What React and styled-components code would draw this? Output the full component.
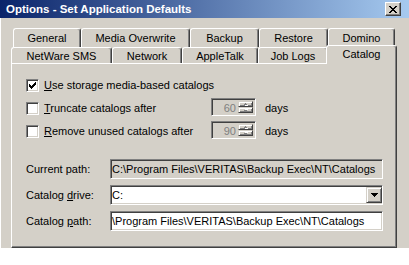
import React from "react";
import styled, { createGlobalStyle } from "styled-components";

const face = "#d4d0c8";
const shadow = "#808080";
const dark = "#404040";

const GlobalStyle = createGlobalStyle`
  html, body {
    margin: 0;
    padding: 0;
    background: #fff;
  }
  body {
    font-family: "Liberation Sans", Arial, sans-serif;
    font-size: 11px;
    color: #000;
  }
`;

const Window = styled.div`
  width: 409px;
  height: 248px;
  background: ${face};
  box-shadow: inset 1px 0 #fff;
  display: flex;
  flex-direction: column;
`;

const TitleBar = styled.div`
  height: 18px;
  flex: none;
  display: flex;
  align-items: center;
  justify-content: space-between;
  padding: 0 8px 0 6px;
  background: linear-gradient(to right, #0a246a, #a6caf0);
  color: #fff;
  font-weight: bold;
  font-size: 11.5px;
`;

const CloseButton = styled.div`
  width: 16px;
  height: 14px;
  box-sizing: border-box;
  background: ${face};
  border: 1px solid;
  border-color: #fff ${dark} ${dark} #fff;
  box-shadow: inset -1px -1px ${shadow};
  display: flex;
  align-items: center;
  justify-content: center;
`;

const Body = styled.div`
  flex: 1;
  padding: 10px 0 0 11px;
  display: flex;
  flex-direction: column;
`;

const TabRow = styled.div`
  display: flex;
  height: ${p => p.$h}px;
  padding-left: ${p => p.$indent || 0}px;
  position: relative;
  z-index: ${p => p.$z || 0};
`;

const Tab = styled.div`
  flex: none;
  width: ${p => p.$w}px;
  height: 100%;
  box-sizing: border-box;
  background: ${face};
  border-top: 1px solid #fff;
  border-left: 1px solid #fff;
  border-right: 1px solid ${dark};
  border-radius: 3px 3px 0 0;
  box-shadow: inset -1px 0 ${shadow};
  display: flex;
  align-items: center;
  justify-content: center;
  white-space: nowrap;
`;

const ActiveTab = styled(Tab)`
  position: relative;
  z-index: 2;
  margin: -2px 0 0 -2px;
  height: calc(100% + 3px);
  padding-bottom: 3px;
`;

const Panel = styled.div`
  width: 386px;
  height: 185px;
  box-sizing: border-box;
  border: 1px solid;
  border-color: #fff ${dark} ${dark} #fff;
  box-shadow: inset -1px -1px ${shadow};
  padding: 11px 0 0 14px;
`;

const CheckGrid = styled.div`
  display: grid;
  grid-template-columns: 176px 45px auto;
  grid-auto-rows: 20px;
  column-gap: 9px;
  row-gap: 3px;
  align-items: center;
`;

const CheckLabel = styled.label`
  grid-column: ${p => (p.$wide ? "1 / -1" : "auto")};
  display: flex;
  align-items: center;
  gap: 5px;
  white-space: nowrap;
`;

const Sunken = styled.div`
  box-sizing: border-box;
  border: 1px solid;
  border-color: ${shadow} #fff #fff ${shadow};
  box-shadow: inset 1px 1px ${dark}, inset -1px -1px ${face};
`;

const CheckBox = styled(Sunken)`
  width: 13px;
  height: 13px;
  flex: none;
  background: #fff;
  display: flex;
  align-items: center;
  justify-content: center;
`;

const Spin = styled(Sunken)`
  width: 45px;
  height: 18px;
  align-self: start;
  background: ${face};
  display: flex;
  padding: 2px;
`;

const SpinValue = styled.div`
  flex: 1;
  text-align: right;
  color: ${shadow};
  line-height: 14px;
  padding-right: 2px;
`;

const SpinButtons = styled.div`
  width: 15px;
  display: flex;
  flex-direction: column;
`;

const Raised = styled.div`
  box-sizing: border-box;
  background: ${face};
  border: 1px solid;
  border-color: ${face} ${dark} ${dark} ${face};
  box-shadow: inset 1px 1px #fff, inset -1px -1px ${shadow};
  display: flex;
  align-items: center;
  justify-content: center;
`;

const SpinButton = styled(Raised)`
  flex: 1;
`;

const FieldGrid = styled.div`
  margin-top: 18px;
  display: grid;
  grid-template-columns: 84px 273px;
  grid-auto-rows: 20px;
  row-gap: 6px;
  align-items: center;
`;

const Field = styled(Sunken)`
  height: 20px;
  background: ${p => (p.$disabled ? face : "#fff")};
  display: flex;
  align-items: center;
  padding-left: 1px;
  white-space: nowrap;
  overflow: hidden;
`;

const FieldText = styled.span`
  flex: 1;
`;

const DropButton = styled(Raised)`
  width: 16px;
  height: 16px;
  flex: none;
`;

const Check = () => (
  <svg width="7" height="7" viewBox="0 0 7 7" shapeRendering="crispEdges">
    <path
      fill="#000"
      d="M6 0h1v1h-1z M5 1h2v1h-2z M0 2h1v1h-1z M4 2h3v1h-3z M0 3h2v1h-2z M3 3h3v1h-3z M0 4h5v1h-5z M1 5h3v1h-3z M2 6h1v1h-1z"
    />
  </svg>
);

const CloseGlyph = () => (
  <svg width="8" height="7" viewBox="0 0 8 7" shapeRendering="crispEdges">
    <path
      fill="#000"
      d="M0 0h2v1h-2z M6 0h2v1h-2z M1 1h2v1h-2z M5 1h2v1h-2z M2 2h4v1h-4z M3 3h2v1h-2z M2 4h4v1h-4z M1 5h2v1h-2z M5 5h2v1h-2z M0 6h2v1h-2z M6 6h2v1h-2z"
    />
  </svg>
);

const DownArrow = () => (
  <svg width="7" height="4" viewBox="0 0 7 4" shapeRendering="crispEdges">
    <path fill="#000" d="M0 0h7v1h-7z M1 1h5v1h-5z M2 2h3v1h-3z M3 3h1v1h-1z" />
  </svg>
);

const SmallArrow = ({ up }) => (
  <svg width="6" height="3" viewBox="0 0 6 3" shapeRendering="crispEdges">
    <g transform={up ? undefined : "matrix(1 0 0 -1 0 3)"}>
      <path fill="#fff" d="M3 1h1v1h-1z M2 2h3v1h-3z" />
      <path fill={shadow} d="M2 0h1v1h-1z M1 1h3v1h-3z" />
    </g>
  </svg>
);

const SpinBox = ({ value }) => (
  <Spin>
    <SpinValue>{value}</SpinValue>
    <SpinButtons>
      <SpinButton><SmallArrow up /></SpinButton>
      <SpinButton><SmallArrow /></SpinButton>
    </SpinButtons>
  </Spin>
);

const backRow = [
  ["General", 68],
  ["Media Overwrite", 109],
  ["Backup", 69],
  ["Restore", 69],
  ["Domino", 67],
];

const frontRow = [
  ["NetWare SMS", 101],
  ["Network", 70],
  ["AppleTalk", 76],
  ["Job Logs", 70],
];

const App = () => (
  <>
    <GlobalStyle />
    <Window>
      <TitleBar>
        <span>Options - Set Application Defaults</span>
        <CloseButton><CloseGlyph /></CloseButton>
      </TitleBar>
      <Body>
        <TabRow $h={19} $indent={2}>
          {backRow.map(([name, w]) => (
            <Tab key={name} $w={w}>{name}</Tab>
          ))}
        </TabRow>
        <TabRow $h={16} $z={1}>
          {frontRow.map(([name, w]) => (
            <Tab key={name} $w={w}>{name}</Tab>
          ))}
          <ActiveTab $w={71}>Catalog</ActiveTab>
        </TabRow>
        <Panel>
          <CheckGrid>
            <CheckLabel $wide>
              <CheckBox><Check /></CheckBox>
              <span><u>U</u>se storage media-based catalogs</span>
            </CheckLabel>
            <CheckLabel>
              <CheckBox />
              <span><u>T</u>runcate catalogs after</span>
            </CheckLabel>
            <SpinBox value="60" />
            <span>days</span>
            <CheckLabel>
              <CheckBox />
              <span><u>R</u>emove unused catalogs after</span>
            </CheckLabel>
            <SpinBox value="90" />
            <span>days</span>
          </CheckGrid>
          <FieldGrid>
            <span>Current path:</span>
            <Field $disabled>
              <FieldText>C:\Program Files\VERITAS\Backup Exec\NT\Catalogs</FieldText>
            </Field>
            <span>Catalog <u>d</u>rive:</span>
            <Field>
              <FieldText>C:</FieldText>
              <DropButton><DownArrow /></DropButton>
            </Field>
            <span>Catalog <u>p</u>ath:</span>
            <Field>
              <FieldText>\Program Files\VERITAS\Backup Exec\NT\Catalogs</FieldText>
            </Field>
          </FieldGrid>
        </Panel>
      </Body>
    </Window>
  </>
);

export default App;
